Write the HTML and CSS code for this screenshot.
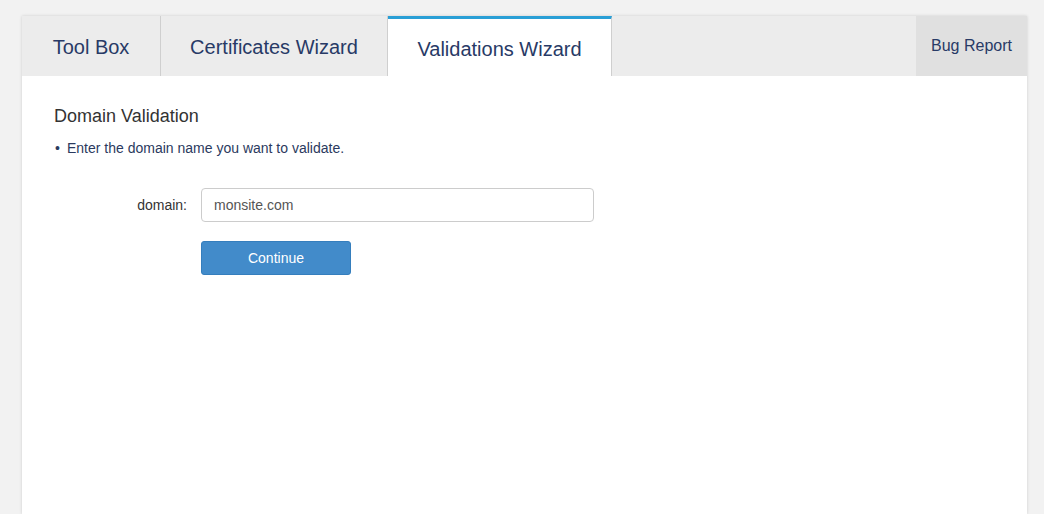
FILE: index.html
```html
<!doctype html>
<html>
	<head>
		<meta charset="utf-8">
		<title>Validations Wizard</title>
		<link rel="stylesheet" href="styles.css">
	</head>
	<body>
		<div class="panel">
			<div class="tabs">
				<a class="tab tool">Tool Box</a>
				<a class="tab cert">Certificates Wizard</a>
				<a class="tab active">Validations Wizard</a>
				<a class="tab bug">Bug Report</a>
			</div>
			<div class="content">
				<h3 class="title">Domain Validation</h3>
				<ul class="notes">
					<li>Enter the domain name you want to validate.</li>
				</ul>
				<form class="form">
					<label class="label" for="domain">domain:</label>
					<input class="field" type="text" id="domain" value="monsite.com">
					<span></span>
					<button type="button" class="btn">Continue</button>
				</form>
			</div>
		</div>
	</body>
</html>
```

FILE: styles.css
```css
body
{
	margin: 0;
	padding: 16px 17px 0 22px;
	background: #f2f2f2;
	font-family: "Liberation Sans", Arial, sans-serif;
	color: #2b3a5e;
}
.panel
{
	width: 1005px;
	height: 498px;
	background: #fff;
	box-shadow: 0 0 3px rgba(0,0,0,0.15);
	display: flex;
	flex-direction: column;
}
.tabs
{
	display: flex;
	height: 60px;
	background: #ececec;
}
.tab
{
	box-sizing: border-box;
	display: flex;
	align-items: center;
	justify-content: center;
	padding-top: 2px;
	font-size: 20px;
	color: #283a66;
	border-right: 1px solid #cfcfcf;
	cursor: pointer;
}
.tab.tool
{
	width: 139px;
}
.tab.cert
{
	width: 227px;
}
.tab.active
{
	width: 224px;
	background: #fff;
	border-top: 3px solid #2a9fd6;
	padding-top: 4px;
}
.tab.bug
{
	margin-left: auto;
	width: 111px;
	border-right: 0;
	background: #e0e0e0;
	font-size: 16px;
	padding-top: 0;
}
.content
{
	padding: 28px 32px;
}
.title
{
	margin: 0;
	font-size: 18px;
	font-weight: normal;
	line-height: 24px;
	color: #333;
}
.notes
{
	list-style: none;
	margin: 10px 0 0 0;
	padding: 0;
	font-size: 14px;
	line-height: 20px;
}
.notes li::before
{
	content: "\2022";
	display: inline-block;
	width: 12px;
	margin-left: 1px;
}
.form
{
	display: grid;
	grid-template-columns: 133px 393px;
	column-gap: 14px;
	row-gap: 19px;
	margin-top: 30px;
	align-items: center;
}
.label
{
	text-align: right;
	font-size: 14px;
	color: #333;
}
.field
{
	box-sizing: border-box;
	height: 34px;
	padding: 0 12px;
	border: 1px solid #ccc;
	border-radius: 4px;
	font: 14px "Liberation Sans", Arial, sans-serif;
	color: #555;
}
.btn
{
	width: 150px;
	height: 34px;
	background: #428bca;
	border: 1px solid #357ebd;
	border-radius: 3px;
	color: #fff;
	font: 14px "Liberation Sans", Arial, sans-serif;
}
```
